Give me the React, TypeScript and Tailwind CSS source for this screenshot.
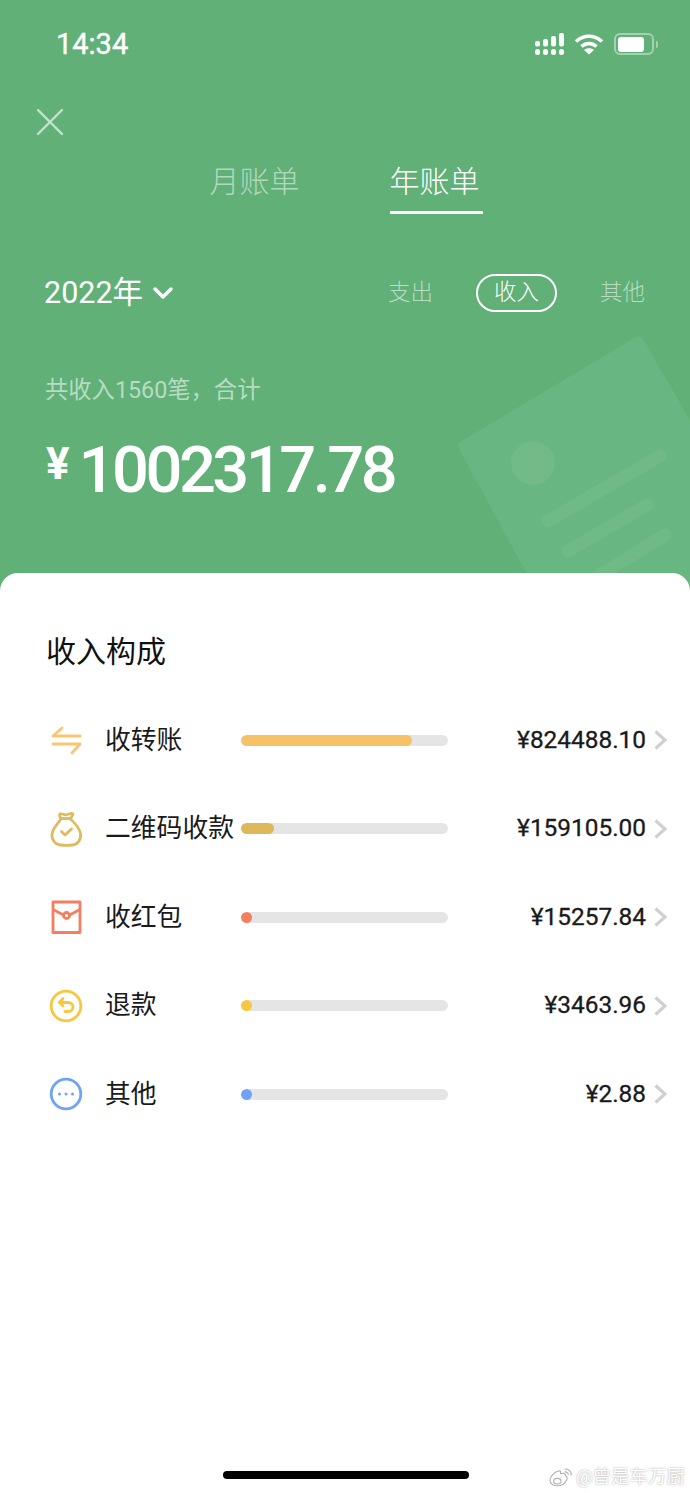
import { ChevronDown } from "lucide-react";
import type { ReactNode } from "react";

type Row = {
  label: string;
  amount: string;
  fill: number;
  color: string;
  icon: ReactNode;
};

const TransferIcon = (
  <svg width="40" height="40" viewBox="0 0 40 40" fill="none" stroke="#F8C670" strokeWidth="2.8" strokeLinecap="round" strokeLinejoin="round">
    <path d="M7 16h27M7 16l9-8" />
    <path d="M7 24h27M34 24l-8 9" />
  </svg>
);

const BagIcon = (
  <svg width="40" height="40" viewBox="0 0 40 40" fill="none" stroke="#DFBB5E" strokeWidth="2.8" strokeLinecap="round" strokeLinejoin="round">
    <path d="M15 9.500c-1.500-2-2-4-1-4.500 2-.8 3.500 1 6 .8 2.500-.2 4.500-2 6.500-1.300 1 .4-.5 3-2 5" />
    <path d="M15 9.500h9.500c1 2.500 8.500 7 10 15 1 6-3 11-8 11.500-4 .4-8 .4-12 0-5-.5-9-5-8.500-10.500.6-7.500 8.500-13 9-16z" />
    <path d="M15.500 22.500l3.500 3.500 6.500-6" />
  </svg>
);

const PacketIcon = (
  <svg width="40" height="40" viewBox="0 0 40 40" fill="none" stroke="#F47E60" strokeWidth="2.800" strokeLinejoin="round">
    <rect x="7" y="5" width="27" height="30.500" />
    <path d="M7 12.500l10.500 5.500M34 12.500l-10.500 5.500" />
    <circle cx="20.500" cy="18.500" r="3" />
  </svg>
);

const RefundIcon = (
  <svg width="40" height="40" viewBox="0 0 40 40" fill="none" stroke="#F8C740" strokeWidth="2.800" strokeLinecap="round" strokeLinejoin="round">
    <circle cx="20" cy="20" r="14.800" />
    <path d="M13.500 16.500h8.500c3 0 5 2 5 4.500s-2 4.500-5 4.500h-3" />
    <path d="M17 12.500l-3.500 4 3.500 3.500" />
  </svg>
);

const MoreIcon = (
  <svg width="40" height="40" viewBox="0 0 40 40" fill="none">
    <circle cx="20" cy="20" r="14.800" stroke="#6DA3FB" strokeWidth="2.800" />
    <circle cx="13.500" cy="20" r="1.500" fill="#6DA3FB" />
    <circle cx="20" cy="20" r="1.500" fill="#6DA3FB" />
    <circle cx="26.500" cy="20" r="1.500" fill="#6DA3FB" />
  </svg>
);

const rows: Row[] = [
  { label: "收转账", amount: "¥824488.10", fill: 171, color: "bg-[#F6C266]", icon: TransferIcon },
  { label: "二维码收款", amount: "¥159105.00", fill: 33, color: "bg-[#DDB95A]", icon: BagIcon },
  { label: "收红包", amount: "¥15257.84", fill: 11, color: "bg-[#F47E60]", icon: PacketIcon },
  { label: "退款", amount: "¥3463.96", fill: 11, color: "bg-[#F8C740]", icon: RefundIcon },
  { label: "其他", amount: "¥2.88", fill: 11, color: "bg-[#6DA3FB]", icon: MoreIcon },
];

function StatusIcons() {
  return (
    <div className="flex items-center gap-[9px]">
      <svg width="31" height="22" viewBox="0 0 31 22" fill="white">
        <rect x="1" y="8" width="5" height="5.500" rx="2" />
        <rect x="9" y="6" width="5" height="7.500" rx="2" />
        <rect x="17" y="3" width="5" height="10.500" rx="2" />
        <rect x="25" y="0" width="5" height="13.500" rx="2" />
        <rect x="1" y="16" width="5" height="6" rx="2.500" />
        <rect x="9" y="16" width="5" height="6" rx="2.500" />
        <rect x="17" y="16" width="5" height="6" rx="2.500" />
        <rect x="25" y="16" width="5" height="6" rx="2.500" />
      </svg>
      <svg width="30" height="22" viewBox="0 0 30 22" fill="none" stroke="white" strokeWidth="3.600">
        <path d="M2 8.500c7.500-7 18.500-7 26 0" />
        <path d="M7.500 13.500c4.500-4 10.500-4 15 0" />
        <path d="M15 21.500l-5-4.500c3-2.300 7-2.300 10 0z" fill="white" stroke="none" />
      </svg>
      <div className="ml-[1px] flex items-center gap-[2px]">
        <div className="flex h-[22px] w-[40px] items-center rounded-[6px] border-2 border-[#a4d2b1] p-[2px]">
          <div className="h-[15px] w-[26px] rounded-[3px] bg-white" />
        </div>
        <div className="h-[7px] w-[2px] rounded-r-full bg-[#a4d2b1]" />
      </div>
    </div>
  );
}

export default function App() {
  return (
    <div className="relative flex h-[1493px] w-[690px] flex-col overflow-hidden bg-[#60B077] font-['Roboto','Noto_Sans_CJK_SC',sans-serif]">
      <svg className="absolute left-0 top-0" width="690" height="600" viewBox="0 0 690 600" fill="none">
        <path d="M458 447q-2-3 2-5L636 337q5-2 7 2L690 420V600H541z" fill="#68B681" />
        <circle cx="533" cy="463" r="22" fill="#72BA88" />
        <path d="M548 521L660 456M568 551L647 505M600 575L665 535" stroke="#70BA87" strokeWidth="13" strokeLinecap="round" />
      </svg>

      <header className="relative h-[573px] shrink-0">
        <div className="flex h-[88px] items-center justify-between pl-[56px] pr-[32px]">
          <span className="text-[29px] leading-none text-white [-webkit-text-stroke:0.4px_white]">14:34</span>
          <StatusIcons />
        </div>

        <div className="pl-[36px] pt-[20px]">
          <svg width="28" height="28" viewBox="0 0 28 28" stroke="#c5e2cd" strokeWidth="2.400" strokeLinecap="round">
            <path d="M2 2l24 24M26 2L2 26" />
          </svg>
        </div>

        <nav className="mt-[24px] flex justify-center gap-[90px] pl-[2px] text-[30px] font-light leading-[44px]">
          <span className="text-[#b0d9bc]">月账单</span>
          <div className="relative">
            <span className="text-white">年账单</span>
            <div className="mx-auto mt-[7px] h-[3px] w-[93px] bg-white" />
          </div>
        </nav>

        <div className="mt-[57px] flex items-center justify-between pl-[44px] pr-[45px]">
          <div className="flex items-center gap-[4px] text-white">
            <span className="text-[30.500px] leading-[44px]">2022年</span>
            <ChevronDown size={32} strokeWidth={2.6} />
          </div>
          <div className="flex items-center text-[22.500px] font-light">
            <span className="text-[#b7dcc2]">支出</span>
            <span className="ml-[43px] flex h-[38px] w-[81px] items-center justify-center rounded-full border-2 border-white text-white">收入</span>
            <span className="ml-[43px] text-[#b7dcc2]">其他</span>
          </div>
        </div>

        <p className="mt-[59px] pl-[45px] text-[23.300px] leading-[32px] text-[#b7dcc2]">共收入1560笔，合计</p>

        <div className="mt-[29px] flex items-center pl-[46px] text-white">
          <span className="mb-[12px] text-[44px] font-bold leading-none">¥</span>
          <span className="ml-[9px] text-[65px] font-medium leading-[70px] tracking-[-3.500px]">1002317.78</span>
        </div>
      </header>

      <main className="relative flex flex-1 flex-col rounded-t-[18px] bg-white">
        <h2 className="pl-[46px] pt-[58px] text-[30px] leading-[42px] text-[#111]">收入构成</h2>

        <ul className="mt-[23px] flex flex-col">
          {rows.map((row) => (
            <li key={row.label} className="flex h-[88.500px] items-center pl-[46px] pr-[23px]">
              <div className="h-[40px] w-[40px] shrink-0">{row.icon}</div>
              <span className="ml-[19px] w-[136px] shrink-0 whitespace-nowrap text-[25.800px] text-[#1a1a1a]">{row.label}</span>
              <div className="h-[11px] w-[207px] shrink-0 overflow-hidden rounded-full bg-[#e5e5e5]">
                <div className={`h-full rounded-full ${row.color}`} style={{ width: row.fill }} />
              </div>
              <span className="flex-1 text-right text-[24.400px] text-[#1a1a1a] [-webkit-text-stroke:0.3px_#1a1a1a]">{row.amount}</span>
              <svg className="ml-[8px] shrink-0" width="13" height="20" viewBox="0 0 13 20" fill="none" stroke="#d0d0d0" strokeWidth="3.200">
                <path d="M1.500 1.500L11 10l-9.500 8.500" />
              </svg>
            </li>
          ))}
        </ul>

        <div className="mb-[14px] mt-auto flex justify-center">
          <div className="ml-[2px] h-[8px] w-[246px] rounded-full bg-black" />
        </div>

        <div className="absolute bottom-[3px] right-[5px] flex items-center gap-[3px] text-[18.500px] leading-[26px] text-white [text-shadow:0_0_2px_#999]">
          <svg width="24" height="21" viewBox="0 0 26 22" fill="white" stroke="#b0b0b0" strokeWidth="1.200">
            <path d="M1 14c0-4 5-9 9-10 3-1 3 2 2 3 3-1 6-1 6 2 2 1 2 3 1 5-2 4-6 6-10 6-4 0-8-2-8-6z" />
            <ellipse cx="9" cy="15" rx="4" ry="3" />
            <path d="M17 2c4-1 8 3 7 7M17 5c2-.5 4 1 4 3" fill="none" />
          </svg>
          <span>@曾是车万厨</span>
        </div>
      </main>
    </div>
  );
}
